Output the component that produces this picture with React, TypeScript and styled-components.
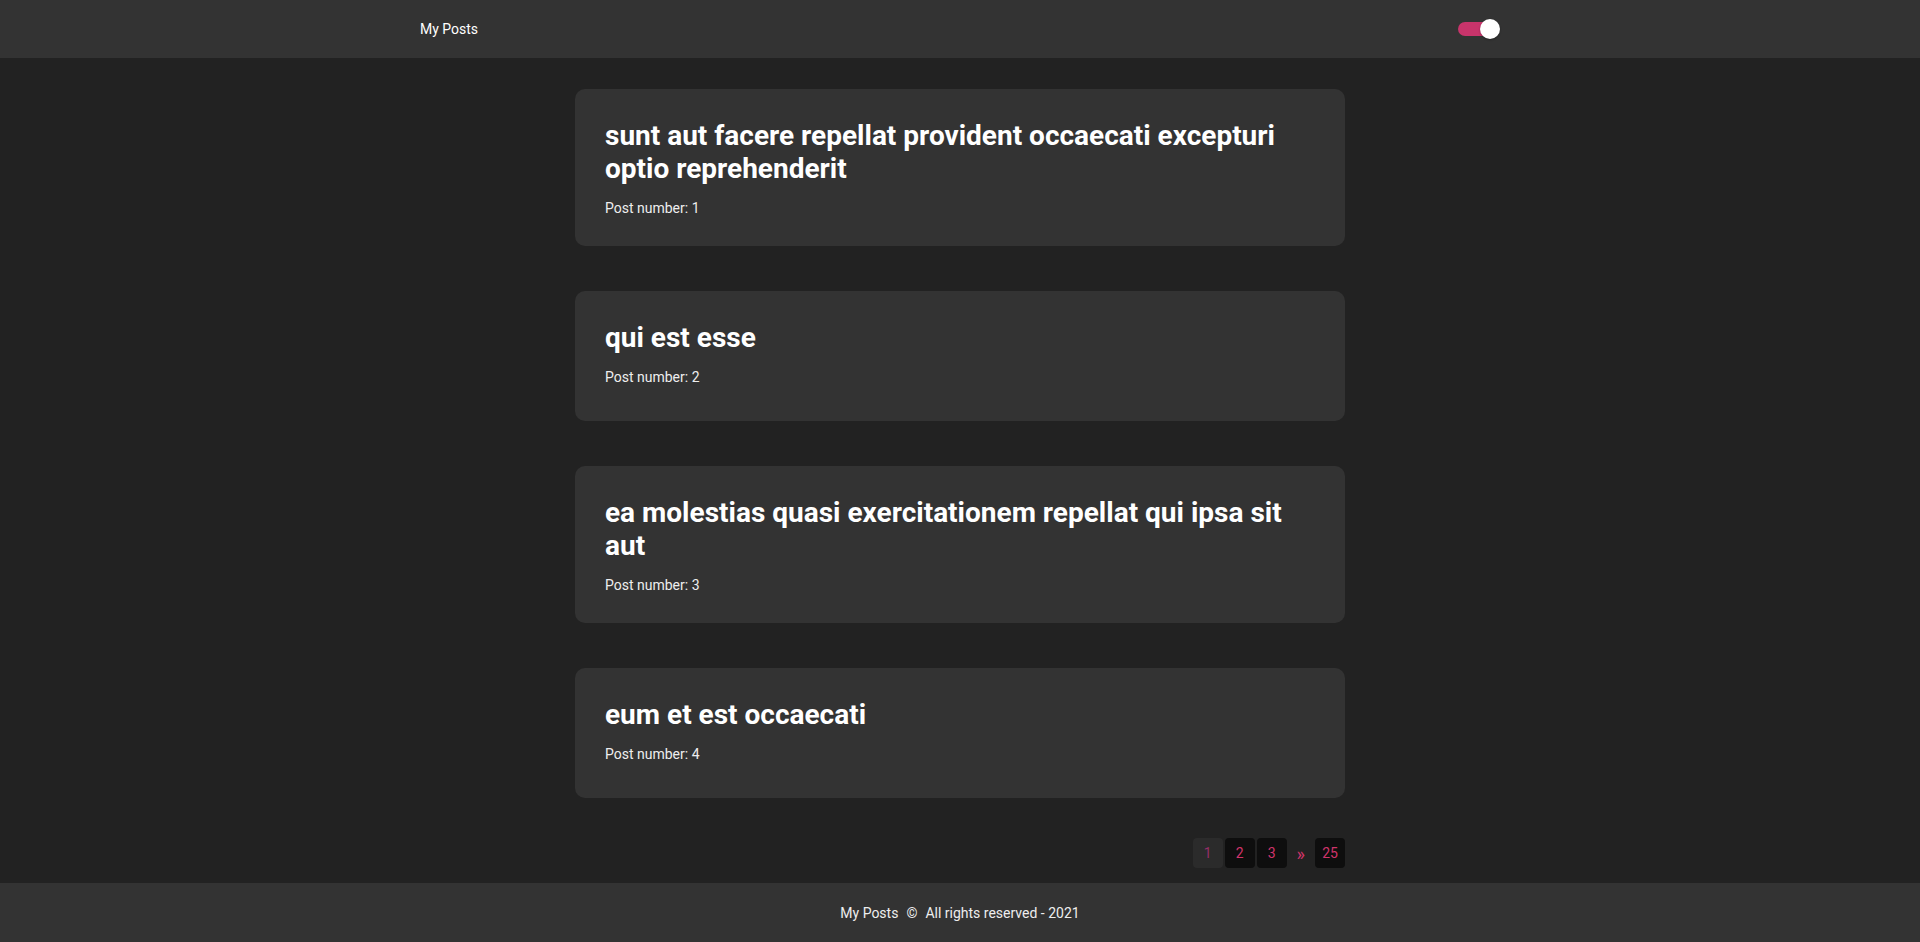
import React, { FC, useState } from 'react';
import styled, { createGlobalStyle } from 'styled-components';

interface Post {
    id: number;
    title: string;
}

const posts: Post[] = [
    { id: 1, title: 'sunt aut facere repellat provident occaecati excepturi optio reprehenderit' },
    { id: 2, title: 'qui est esse' },
    { id: 3, title: 'ea molestias quasi exercitationem repellat qui ipsa sit aut' },
    { id: 4, title: 'eum et est occaecati' },
];

const GlobalStyle = createGlobalStyle`
    * {
        box-sizing: border-box;
    }
    html, body {
        margin: 0;
        padding: 0;
        background: #222222;
        font-family: Roboto, "Liberation Sans", sans-serif;
        color: #ffffff;
    }
`;

const Page = styled.div`
    min-height: 942px;
    display: flex;
    flex-direction: column;
`;

const Header = styled.header`
    height: 58px;
    background: #333333;
    display: flex;
    justify-content: center;
`;

const HeaderInner = styled.div`
    width: 1080px;
    display: flex;
    align-items: center;
    justify-content: space-between;
`;

const Brand = styled.span`
    font-size: 14px;
    color: #ffffff;
`;

const Switch = styled.button<{ $on: boolean }>`
    position: relative;
    width: 42px;
    height: 20px;
    padding: 0;
    border: none;
    background: transparent;
    cursor: pointer;

    &::before {
        content: '';
        position: absolute;
        left: 0;
        top: 3px;
        width: 34px;
        height: 14px;
        border-radius: 7px;
        background: ${p => (p.$on ? '#c8346b' : '#777777')};
    }

    &::after {
        content: '';
        position: absolute;
        top: 0;
        left: ${p => (p.$on ? '22px' : '0')};
        width: 20px;
        height: 20px;
        border-radius: 50%;
        background: #ffffff;
        box-shadow: 0 1px 2px rgba(0, 0, 0, 0.3);
    }
`;

const Main = styled.main`
    flex: 1;
    display: flex;
    flex-direction: column;
    align-items: center;
    padding: 31px 0 15px;
`;

const List = styled.div`
    width: 770px;
    display: flex;
    flex-direction: column;
    gap: 45px;
`;

const Card = styled.article`
    min-height: 130px;
    padding: 30px;
    background: #333333;
    border-radius: 10px;
`;

const Title = styled.h2`
    margin: 0 0 15px;
    font-size: 28px;
    font-weight: 700;
    line-height: normal;
    color: #ffffff;
`;

const Number = styled.p`
    margin: 0;
    font-size: 14px;
    line-height: normal;
    color: #eeeeee;
`;

const Pager = styled.nav`
    width: 770px;
    margin-top: 40px;
    display: flex;
    justify-content: flex-end;
    gap: 2px;
`;

const PageButton = styled.button<{ $active?: boolean; $plain?: boolean }>`
    min-width: ${p => (p.$plain ? '0' : '30px')};
    height: 30px;
    padding: ${p => (p.$plain ? '0 8px' : '0 7px')};
    border: none;
    border-radius: 4px;
    font-family: Roboto, "Liberation Sans", sans-serif;
    font-size: ${p => (p.$plain ? '18px' : '14px')};
    cursor: pointer;
    background: ${p => (p.$plain ? 'transparent' : p.$active ? '#2b2b2b' : '#0e0e0e')};
    color: ${p => (p.$active ? '#952e68' : '#d0346b')};
`;

const Footer = styled.footer`
    height: 60px;
    background: #333333;
    display: flex;
    align-items: center;
    justify-content: center;
    font-size: 14px;
    color: #eeeeee;
`;

const Copy = styled.span`
    margin: 0 8px;
`;

const PostCard: FC<{ post: Post }> = ({ post }) => (
    <Card>
        <Title>{post.title}</Title>
        <Number>Post number: {post.id}</Number>
    </Card>
);

const App: FC = () => {
    const [dark, setDark] = useState(true);

    return (
        <>
            <GlobalStyle />
            <Page>
                <Header>
                    <HeaderInner>
                        <Brand>My Posts</Brand>
                        <Switch $on={dark} onClick={() => setDark(!dark)} aria-label="theme" />
                    </HeaderInner>
                </Header>
                <Main>
                    <List>
                        {posts.map(post => (
                            <PostCard key={post.id} post={post} />
                        ))}
                    </List>
                    <Pager>
                        <PageButton $active>1</PageButton>
                        <PageButton>2</PageButton>
                        <PageButton>3</PageButton>
                        <PageButton $plain>»</PageButton>
                        <PageButton>25</PageButton>
                    </Pager>
                </Main>
                <Footer>
                    My Posts <Copy>©</Copy> All rights reserved - 2021
                </Footer>
            </Page>
        </>
    );
};

export default App;
